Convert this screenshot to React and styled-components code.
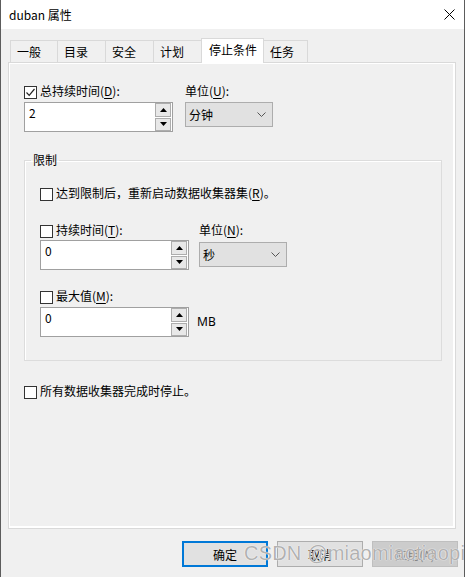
import styled, { createGlobalStyle } from "styled-components";

const GlobalStyle = createGlobalStyle`
  html, body {
    margin: 0;
    padding: 0;
    background: #ffffff;
  }
  body {
    font-family: "Noto Sans CJK SC", "Noto Sans", sans-serif;
    font-size: 12px;
    color: #000;
  }
`;

const Window = styled.div`
  position: relative;
  width: 465px;
  height: 577px;
  box-sizing: border-box;
  border-left: 1px solid #5c5c5c;
  border-right: 1px solid #5c5c5c;
  display: flex;
  flex-direction: column;
  overflow: hidden;
`;

const TitleBar = styled.div`
  height: 29px;
  flex: none;
  display: flex;
  align-items: center;
  justify-content: space-between;
  padding: 0 9px 0 8px;
  background: #ffffff;
  font-size: 12px;
`;

const CloseButton = styled.div`
  width: 12px;
  height: 12px;
  display: flex;
  align-items: center;
  justify-content: center;
`;

const Body = styled.div`
  flex: 1;
  background: #f0f0f0;
  padding: 9px 7px 0 7px;
  display: flex;
  flex-direction: column;
`;

const TabRow = styled.div`
  display: flex;
  align-items: flex-end;
  height: 25px;
  padding-left: 2px;
  margin-bottom: -1px;
  position: relative;
  z-index: 1;
`;

const Tab = styled.div`
  box-sizing: border-box;
  width: ${({ width }) => width}px;
  height: ${({ active }) => (active ? 25 : 23)}px;
  margin-left: -1px;
  padding-left: ${({ active }) => (active ? 7 : 6)}px;
  border: 1px solid #d9d9d9;
  border-bottom: ${({ active }) => (active ? "none" : "1px solid #d9d9d9")};
  background: ${({ active }) => (active ? "#ffffff" : "#f0f0f0")};
  display: flex;
  align-items: ${({ active }) => (active ? "flex-start" : "center")};
  padding-top: ${({ active }) => (active ? 2 : 0)}px;
  font-size: 12px;
  line-height: 18px;
  position: relative;
  z-index: ${({ active }) => (active ? 2 : 1)};
  &:first-child {
    margin-left: 0;
  }
`;

const Panel = styled.div`
  box-sizing: border-box;
  width: 448px;
  height: 467px;
  flex: none;
  border: 1px solid #d9d9d9;
  box-shadow: inset 1px 1px 0 #ffffff, inset -2px -2px 0 #ffffff;
  background: #f0f0f0;
  padding: 19px 15px 0 15px;
  display: flex;
  flex-direction: column;
`;

const FieldRow = styled.div`
  display: flex;
  gap: ${({ gap }) => gap}px;
  align-items: flex-start;
`;

const Field = styled.div`
  display: flex;
  flex-direction: column;
  gap: ${({ gap }) => gap ?? 2}px;
`;

const Label = styled.label`
  display: flex;
  align-items: center;
  height: 18px;
  line-height: 18px;
  font-size: 12px;
  white-space: nowrap;
  u {
    text-decoration: underline;
    text-underline-offset: 2px;
  }
`;

const Box = styled.span`
  box-sizing: border-box;
  width: 13px;
  height: 13px;
  border: 1px solid #333333;
  background: #ffffff;
  margin-right: 3px;
  margin-top: 3px;
  display: inline-flex;
  align-items: center;
  justify-content: center;
  flex: none;
`;

const SpinWrap = styled.div`
  box-sizing: border-box;
  width: 149px;
  height: 30px;
  border: 1px solid #a0a0a0;
  background: #ffffff;
  display: flex;
`;

const SpinText = styled.div`
  flex: 1;
  padding: 1px 0 0 4px;
  font-size: 12px;
  line-height: 18px;
`;

const SpinButtons = styled.div`
  width: 16px;
  display: flex;
  flex-direction: column;
  gap: 1px;
  padding: 0 1px 0 0;
`;

const SpinButton = styled.div`
  flex: 1;
  box-sizing: border-box;
  border: 1px solid #adadad;
  background: #e8e8e8;
  display: flex;
  align-items: center;
  justify-content: center;
`;

const Select = styled.div`
  box-sizing: border-box;
  width: 88px;
  height: 25px;
  margin-top: ${({ offset }) => offset ?? 0}px;
  border: 1px solid #adadad;
  background: #e1e1e1;
  display: flex;
  align-items: center;
  justify-content: space-between;
  padding: 0 6px 0 3px;
  font-size: 12px;
`;

const Group = styled.fieldset`
  box-sizing: border-box;
  width: 418px;
  margin: 19px 0 0 0;
  padding: 15px 15px 23px 15px;
  border: 1px solid #dcdcdc;
  box-shadow: inset 1px 1px 0 #ffffff;
  min-width: 0;
`;

const Legend = styled.legend`
  padding: 0 2px;
  margin-left: -9px;
  font-size: 12px;
  line-height: 18px;
`;

const GroupBody = styled.div`
  display: flex;
  flex-direction: column;
`;

const Spacer = styled.div`
  height: ${({ h }) => h}px;
  flex: none;
`;

const Unit = styled.span`
  font-size: 12px;
  line-height: 18px;
  margin-left: 8px;
  align-self: center;
  font-family: "Noto Sans", "Liberation Sans", sans-serif;
`;

const ButtonBar = styled.div`
  display: flex;
  justify-content: flex-end;
  gap: 9px;
  padding-top: 12px;
  margin-right: -1px;
`;

const Button = styled.div`
  box-sizing: border-box;
  width: 86px;
  height: 26px;
  display: flex;
  align-items: center;
  justify-content: center;
  font-size: 12px;
  background: ${({ disabled }) => (disabled ? "#cccccc" : "#e1e1e1")};
  color: ${({ disabled }) => (disabled ? "#838383" : "#000")};
  border: ${({ primary, disabled }) =>
    primary ? "2px solid #0078d7" : disabled ? "1px solid #bfbfbf" : "1px solid #adadad"};
`;

const Watermark = styled.div`
  position: absolute;
  left: 243px;
  top: 541px;
  font-family: "Liberation Sans", Arial, sans-serif;
  font-size: 20px;
  line-height: 24px;
  letter-spacing: 0.2px;
  color: rgba(125, 125, 125, 0.6);
  text-shadow: 0 0 1px #fff, 0 0 1px #fff;
  pointer-events: none;
  white-space: nowrap;
`;

const Check = () => (
  <svg width="11" height="11" viewBox="0 0 11 11">
    <path d="M1.5 5.5 L4.2 8.3 L9.5 2" fill="none" stroke="#222" strokeWidth="1.2" />
  </svg>
);

const Checkbox = ({ checked, children }) => (
  <Label>
    <Box>{checked && <Check />}</Box>
    {children}
  </Label>
);

const Arrow = ({ down }) => (
  <svg width="7" height="4" viewBox="0 0 7 4">
    <path d={down ? "M0 0 H7 L3.5 4 Z" : "M0 4 H7 L3.5 0 Z"} fill="#000" />
  </svg>
);

const Spin = ({ value }) => (
  <SpinWrap>
    <SpinText>{value}</SpinText>
    <SpinButtons>
      <SpinButton>
        <Arrow />
      </SpinButton>
      <SpinButton>
        <Arrow down />
      </SpinButton>
    </SpinButtons>
  </SpinWrap>
);

const Chevron = () => (
  <svg width="9" height="5" viewBox="0 0 9 5">
    <path d="M0.5 0.5 L4.5 4.5 L8.5 0.5" fill="none" stroke="#555" strokeWidth="1" />
  </svg>
);

const tabs = [
  { label: "一般", width: 48 },
  { label: "目录", width: 49 },
  { label: "安全", width: 49 },
  { label: "计划", width: 49 },
  { label: "停止条件", width: 63, active: true },
  { label: "任务", width: 45 },
];

export default function App() {
  return (
    <>
      <GlobalStyle />
      <Window>
        <TitleBar>
          <span>duban 属性</span>
          <CloseButton>
            <svg width="11" height="11" viewBox="0 0 11 11">
              <path d="M0.5 0.5 L10.5 10.5 M10.5 0.5 L0.5 10.5" stroke="#000" strokeWidth="1" />
            </svg>
          </CloseButton>
        </TitleBar>
        <Body>
          <TabRow>
            {tabs.map((t) => (
              <Tab key={t.label} width={t.width} active={t.active}>
                {t.label}
              </Tab>
            ))}
          </TabRow>
          <Panel>
            <FieldRow gap={12}>
              <Field>
                <Checkbox checked>
                  总持续时间(<u>D</u>):
                </Checkbox>
                <Spin value="2" />
              </Field>
              <Field>
                <Label>
                  单位(<u>U</u>):
                </Label>
                <Select>
                  <span>分钟</span>
                  <Chevron />
                </Select>
              </Field>
            </FieldRow>

            <Group>
              <Legend>限制</Legend>
              <GroupBody>
                <Checkbox>
                  达到限制后，重新启动数据收集器集(<u>R</u>)。
                </Checkbox>
                <Spacer h={19} />
                <FieldRow gap={10}>
                  <Field gap={1}>
                    <Checkbox>
                      持续时间(<u>T</u>):
                    </Checkbox>
                    <Spin value="0" />
                  </Field>
                  <Field>
                    <Label>
                      单位(<u>N</u>):
                    </Label>
                    <Select offset={1}>
                      <span>秒</span>
                      <Chevron />
                    </Select>
                  </Field>
                </FieldRow>
                <Spacer h={17} />
                <Field gap={2}>
                  <Checkbox>
                    最大值(<u>M</u>):
                  </Checkbox>
                  <FieldRow gap={0}>
                    <Spin value="0" />
                    <Unit>MB</Unit>
                  </FieldRow>
                </Field>
              </GroupBody>
            </Group>

            <Spacer h={21} />
            <Checkbox>所有数据收集器完成时停止。</Checkbox>
          </Panel>
          <ButtonBar>
            <Button primary>确定</Button>
            <Button>取消</Button>
            <Button disabled>应用(A)</Button>
          </ButtonBar>
        </Body>
        <Watermark>CSDN @miaomiaotiaopi</Watermark>
      </Window>
    </>
  );
}
